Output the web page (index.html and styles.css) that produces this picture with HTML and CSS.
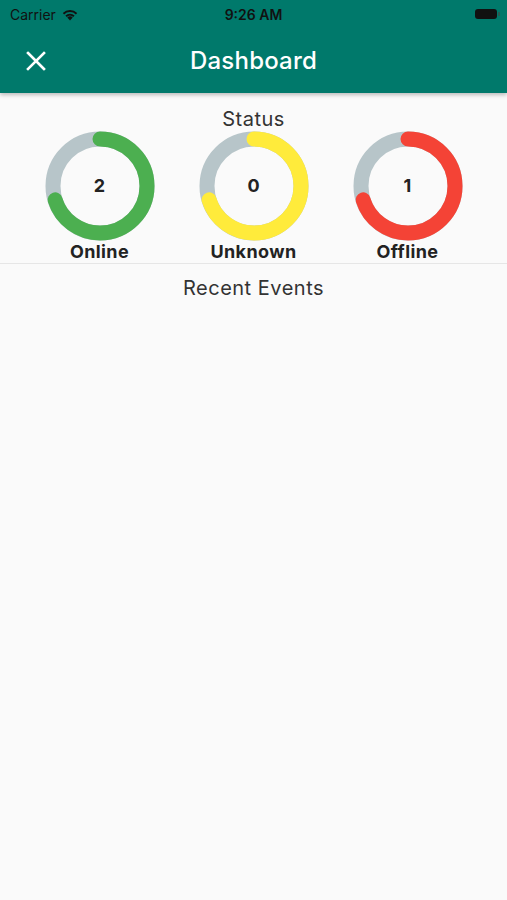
FILE: index.html
```html
<!DOCTYPE html>
<html lang="en">
<head>
  <meta charset="UTF-8">
  <meta name="viewport" content="width=device-width, initial-scale=1.0">
  <title>Dashboard</title>
  <link rel="stylesheet" href="styles.css">
</head>
<body>
  <header class="appbar">
    <div class="statusbar">
      <span class="carrier">Carrier
        <svg class="wifi" width="18" height="13" viewBox="0 0 18 13">
          <path d="M9 12.5 L6.3 9.6 A4 4 0 0 1 11.7 9.6 Z" fill="#111"/>
          <path d="M4.4 7.6 A6.6 6.6 0 0 1 13.6 7.6 L12.3 9 A4.8 4.8 0 0 0 5.7 9 Z" fill="#111"/>
          <path d="M1.8 5 A10.2 10.2 0 0 1 16.2 5 L14.9 6.4 A8.4 8.4 0 0 0 3.1 6.4 Z" fill="#111"/>
        </svg>
      </span>
      <span class="clock">9:26 AM</span>
      <span class="battery"></span>
    </div>
    <div class="toolbar">
      <svg class="close" width="20" height="20" viewBox="0 0 20 20">
        <path d="M2 2 L18 18 M18 2 L2 18" stroke="#fff" stroke-width="2.6" stroke-linecap="square"/>
      </svg>
      <h1>Dashboard</h1>
    </div>
  </header>

  <main>
    <h2 class="section-title">Status</h2>
    <section class="rings">
      <div class="ring online">
        <svg viewBox="0 0 110 110" width="110" height="110">
          <circle class="track" cx="55" cy="55" r="47"/>
          <circle class="arc" cx="55" cy="55" r="47"/>
        </svg>
        <span class="count">2</span>
        <span class="label">Online</span>
      </div>
      <div class="ring unknown">
        <svg viewBox="0 0 110 110" width="110" height="110">
          <circle class="track" cx="55" cy="55" r="47"/>
          <circle class="arc" cx="55" cy="55" r="47"/>
        </svg>
        <span class="count">0</span>
        <span class="label">Unknown</span>
      </div>
      <div class="ring offline">
        <svg viewBox="0 0 110 110" width="110" height="110">
          <circle class="track" cx="55" cy="55" r="47"/>
          <circle class="arc" cx="55" cy="55" r="47"/>
        </svg>
        <span class="count">1</span>
        <span class="label">Offline</span>
      </div>
    </section>
    <hr>
    <h2 class="section-title events">Recent Events</h2>
  </main>
</body>
</html>
```

FILE: styles.css
```css
body {
  margin: 0;
  padding: 0;
  background: #fafafa;
  font-family: Inter, Roboto, "Liberation Sans", sans-serif;
  color: #222;
}

.appbar {
  background: #00796b;
  box-shadow: 0 2px 4px rgba(0,0,0,.25);
  position: relative;
}

.statusbar {
  height: 28px;
  display: grid;
  grid-template-columns: 1fr auto 1fr;
  align-items: center;
  padding: 0 10px;
  font-size: 14px;
  color: #111;
}

.carrier {
  display: flex;
  align-items: center;
  gap: 5px;
}

.clock {
  font-weight: 600;
}

.battery {
  justify-self: end;
  width: 22px;
  height: 10px;
  border-radius: 3px;
  background: #111;
  position: relative;
}
.battery::after {
  content: '';
  position: absolute;
  right: -3px;
  top: 3px;
  width: 2px;
  height: 4px;
  border-radius: 0 1px 1px 0;
  background: #2a5a52;
}

.toolbar {
  height: 65px;
  display: flex;
  align-items: center;
  justify-content: center;
  position: relative;
}

.close {
  position: absolute;
  left: 26px;
  top: 23px;
}

.toolbar h1 {
  margin: 0;
  color: #fff;
  font-size: 24px;
  font-weight: 500;
  letter-spacing: .2px;
}

main {
  padding-top: 14px;
}

.section-title {
  margin: 0;
  text-align: center;
  font-size: 20px;
  line-height: 24px;
  font-weight: 400;
  letter-spacing: .5px;
  color: #333;
}

.rings {
  display: grid;
  grid-template-columns: repeat(3, 154px);
  justify-content: center;
}

.ring {
  display: grid;
  justify-items: center;
  position: relative;
}

.ring svg {
  display: block;
  transform: rotate(-90deg);
}

.track,
.arc {
  fill: none;
  stroke-width: 15;
}

.track {
  stroke: #b7c5c9;
}

.arc {
  stroke-linecap: round;
  stroke-dasharray: 207 400;
}

.online .arc { stroke: #4caf50; }
.unknown .arc { stroke: #ffeb3b; }
.offline .arc { stroke: #f44336; }

.count {
  position: absolute;
  top: 44px;
  left: 0;
  right: 0;
  text-align: center;
  font-size: 18px;
  line-height: 22px;
  font-weight: 700;
}

.label {
  font-size: 18px;
  line-height: 22px;
  font-weight: 700;
  letter-spacing: .4px;
  color: #222;
}

hr {
  margin: 0;
  border: 0;
  border-top: 1px solid #e6e6e6;
}

.events {
  margin-top: 12px;
}
```
